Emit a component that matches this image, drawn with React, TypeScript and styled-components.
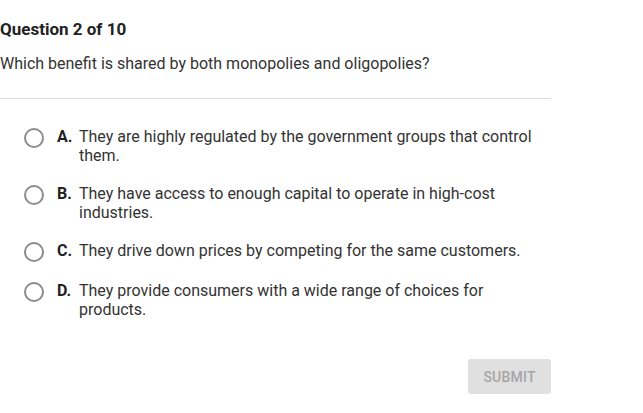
import styled, { createGlobalStyle } from "styled-components";

const GlobalStyle = createGlobalStyle`
  body {
    margin: 0;
    background: #ffffff;
    font-family: Roboto, "Liberation Sans", Arial, sans-serif;
    color: #333333;
  }
`;

const Page = styled.main`
  width: 551px;
  padding-top: 19px;
`;

const Title = styled.h2`
  margin: 0;
  font-size: 17px;
  font-weight: 700;
  line-height: 20px;
  color: #222222;
`;

const Prompt = styled.p`
  margin: 15px 0 0;
  font-size: 16px;
  line-height: 20px;
  color: #333333;
`;

const Divider = styled.hr`
  margin: 24px 0 0;
  border: 0;
  border-top: 1px solid #dddddd;
`;

const Options = styled.ul`
  list-style: none;
  margin: 0;
  padding: 28px 0 0 24px;
  display: flex;
  flex-direction: column;
  gap: 19px;
`;

const Option = styled.li`
  display: flex;
  align-items: flex-start;
  font-size: 16px;
  line-height: 19px;
  color: #333333;
`;

const Radio = styled.span`
  flex: 0 0 auto;
  width: 16px;
  height: 16px;
  border: 2px solid #8c8c8c;
  border-radius: 50%;
  margin-top: 1px;
  margin-right: 13px;
`;

const Letter = styled.span`
  flex: 0 0 22px;
  font-weight: 700;
  color: #222222;
`;

const Text = styled.span`
  flex: 1;
  padding-right: 10px;
`;

const Footer = styled.div`
  display: flex;
  justify-content: flex-end;
  padding-top: 40px;
`;

const SubmitButton = styled.button`
  width: 83px;
  height: 35px;
  border: 0;
  border-radius: 3px;
  background: #e0e0e0;
  color: #a6a6a6;
  font-family: Roboto, "Liberation Sans", Arial, sans-serif;
  font-size: 14px;
  font-weight: 500;
  letter-spacing: 0.2px;
`;

const choices = [
  { key: "A", text: "They are highly regulated by the government groups that control them." },
  { key: "B", text: "They have access to enough capital to operate in high-cost industries." },
  { key: "C", text: "They drive down prices by competing for the same customers." },
  { key: "D", text: "They provide consumers with a wide range of choices for products." },
];

export default function App() {
  return (
    <>
      <GlobalStyle />
      <Page>
        <Title>Question 2 of 10</Title>
        <Prompt>Which benefit is shared by both monopolies and oligopolies?</Prompt>
        <Divider />
        <Options>
          {choices.map((c) => (
            <Option key={c.key}>
              <Radio />
              <Letter>{c.key}.</Letter>
              <Text>{c.text}</Text>
            </Option>
          ))}
        </Options>
        <Footer>
          <SubmitButton disabled>SUBMIT</SubmitButton>
        </Footer>
      </Page>
    </>
  );
}
